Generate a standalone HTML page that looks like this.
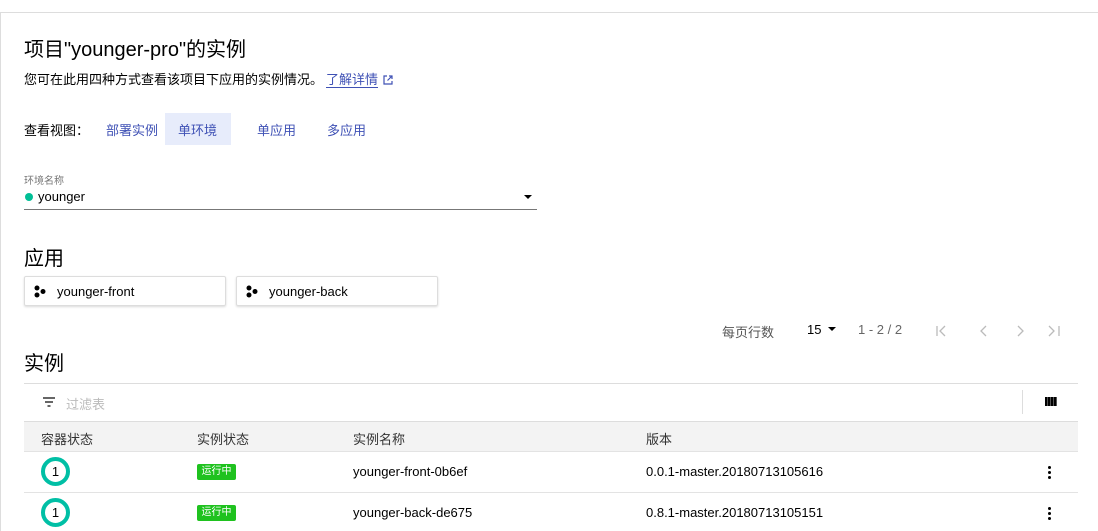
<!DOCTYPE html>
<html><head><meta charset="utf-8"><style>
*{margin:0;padding:0;box-sizing:border-box}
body{width:1098px;height:531px;overflow:hidden;background:#fff;font-family:"Liberation Sans","Noto Sans CJK SC",sans-serif;color:#000;position:relative}
.a{position:absolute;white-space:nowrap}
.tab{color:#3f51b5;font-size:13px}
.card{position:absolute;top:276px;width:202px;height:30px;border:1px solid #ddd;border-radius:2px;box-shadow:0 1px 2px rgba(0,0,0,.15);font-size:13px}
.card span{position:absolute;left:32px;top:7px}
.hd{font-size:13px;color:#333}
.c{position:absolute;width:29px;height:29px;border:4px solid #00bfa5;border-radius:50%;font-size:13px;text-align:center;line-height:21px}
.b{position:absolute;width:39px;height:16px;background:#1fc21f;color:#fff;font-size:10px;text-align:center;line-height:16px;border-radius:2px}
.k{position:absolute;width:3px;height:3px;background:#000;border-radius:50%}
</style></head><body>
<div class="a" style="left:0;top:12px;width:1098px;height:1px;background:#ddd"></div>
<div class="a" style="left:0;top:12px;width:1px;height:519px;background:#ddd"></div>
<div class="a" style="left:24px;top:33px;font-size:20px">项目"younger-pro"的实例</div>
<div class="a" style="left:24px;top:69px;font-size:13px">您可在此用四种方式查看该项目下应用的实例情况。<span style="color:#3f51b5;border-bottom:1px solid #3f51b5;margin-left:3px">了解详情</span><svg width="10" height="10" style="margin-left:5px;vertical-align:-1px" fill="none" stroke="#3f51b5" stroke-width="1.2"><path d="M4 1H1v8h8V6M6 1h3v3M9 1L4.5 5.5"/></svg></div>
<div class="a" style="left:24px;top:120px;font-size:13px">查看视图：</div>
<div class="a tab" style="left:106px;top:120px">部署实例</div>
<div class="a" style="left:165px;top:113px;width:66px;height:32px;background:#e7ecfb"></div>
<div class="a tab" style="left:178px;top:120px">单环境</div>
<div class="a tab" style="left:257px;top:120px">单应用</div>
<div class="a tab" style="left:327px;top:120px">多应用</div>
<div class="a" style="left:24px;top:172px;font-size:10px;color:#777">环境名称</div>
<div class="a" style="left:25px;top:193px;width:8px;height:8px;border-radius:50%;background:#00bf96"></div>
<div class="a" style="left:38px;top:189px;font-size:13px">younger</div>
<div class="a" style="left:524px;top:195px;border-left:4px solid transparent;border-right:4px solid transparent;border-top:4px solid #000"></div>
<div class="a" style="left:24px;top:209px;width:513px;height:1px;background:#777"></div>
<div class="a" style="left:24px;top:242px;font-size:20px">应用</div>
<div class="card" style="left:24px"><svg style="position:absolute;left:9px;top:8px" width="14" height="14"><circle cx="3" cy="3" r="2.5"/><circle cx="3" cy="10" r="2.5"/><circle cx="9" cy="6.5" r="2.5"/></svg><span>younger-front</span></div>
<div class="card" style="left:236px"><svg style="position:absolute;left:9px;top:8px" width="14" height="14"><circle cx="3" cy="3" r="2.5"/><circle cx="3" cy="10" r="2.5"/><circle cx="9" cy="6.5" r="2.5"/></svg><span>younger-back</span></div>
<div class="a" style="left:722px;top:322px;font-size:13px;color:#555">每页行数</div>
<div class="a" style="left:807px;top:322px;font-size:13px">15</div>
<div class="a" style="left:828px;top:327px;border-left:4px solid transparent;border-right:4px solid transparent;border-top:4px solid #000"></div>
<div class="a" style="left:858px;top:322px;font-size:13px;color:#666">1 - 2 / 2</div>
<svg class="a" style="left:930px;top:320px" width="140" height="22" fill="none" stroke="#bbb" stroke-width="1.3"><path d="M7 6v10M15 6l-5 5 5 5"/><path d="M56 6l-5 5 5 5"/><path d="M88 6l5 5-5 5"/><path d="M119 6l5 5-5 5M129 6v10"/></svg>
<div class="a" style="left:24px;top:347px;font-size:20px">实例</div>
<div class="a" style="left:24px;top:383px;width:1054px;height:1px;background:#ddd"></div>
<svg class="a" style="left:42px;top:396px" width="14" height="12"><path d="M1 2h12M3 6h8M5.5 10h3" stroke="#333" stroke-width="1.5"/></svg>
<div class="a" style="left:66px;top:394px;font-size:13px;color:#bbb">过滤表</div>
<div class="a" style="left:1022px;top:390px;width:1px;height:24px;background:#ddd"></div>
<div class="a" style="left:1045px;top:397px;width:12px;height:9px;background:repeating-linear-gradient(90deg,#000 0 2px,#555 2px 3px)"></div>
<div class="a" style="left:24px;top:421px;width:1054px;height:31px;background:#f3f3f3;border-top:1px solid #ddd;border-bottom:1px solid #e3e3e3"></div>
<div class="a hd" style="left:41px;top:429px">容器状态</div>
<div class="a hd" style="left:197px;top:429px">实例状态</div>
<div class="a hd" style="left:353px;top:429px">实例名称</div>
<div class="a hd" style="left:646px;top:429px">版本</div>
<div class="c" style="left:41px;top:457px">1</div>
<div class="b" style="left:197px;top:464px">运行中</div>
<div class="a" style="left:353px;top:464px;font-size:13px">younger-front-0b6ef</div>
<div class="a" style="left:646px;top:464px;font-size:13px">0.0.1-master.20180713105616</div>
<div class="k" style="left:1048px;top:466px"></div><div class="k" style="left:1048px;top:471px"></div><div class="k" style="left:1048px;top:476px"></div>
<div class="a" style="left:24px;top:492px;width:1054px;height:1px;background:#e3e3e3"></div>
<div class="c" style="left:41px;top:498px">1</div>
<div class="b" style="left:197px;top:505px">运行中</div>
<div class="a" style="left:353px;top:505px;font-size:13px">younger-back-de675</div>
<div class="a" style="left:646px;top:505px;font-size:13px">0.8.1-master.20180713105151</div>
<div class="k" style="left:1048px;top:507px"></div><div class="k" style="left:1048px;top:512px"></div><div class="k" style="left:1048px;top:517px"></div>
</body></html>
